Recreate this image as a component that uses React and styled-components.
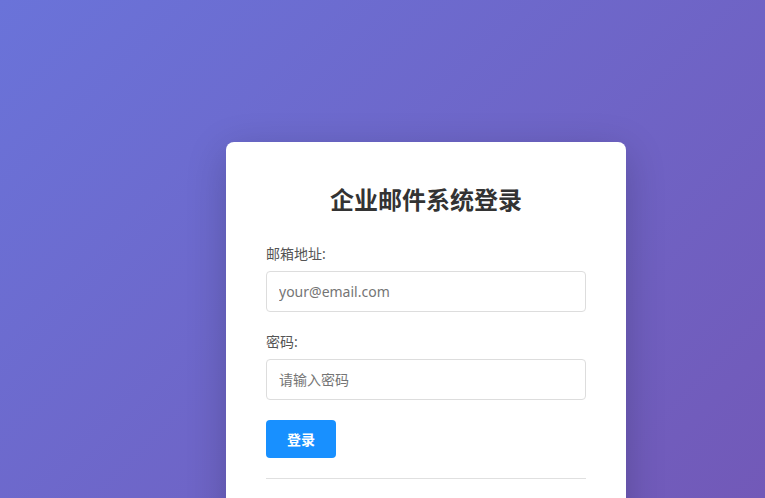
import styled, { createGlobalStyle } from 'styled-components';

const GlobalStyle = createGlobalStyle`
html, body {
  margin: 0;
  padding: 0;
}
body {
  font-family: "Noto Sans", "Noto Sans CJK SC", sans-serif;
  background: linear-gradient(135deg, #6a73d9 0%, #7259b8 100%) fixed;
  min-height: 100vh;
}
* {
  box-sizing: border-box;
}
`;

function App() {
    return (
        <Page>
            <GlobalStyle />
            <Card>
                <Title>企业邮件系统登录</Title>
                <Field>
                    <Label htmlFor="email">邮箱地址:</Label>
                    <Input id="email" type="email" placeholder="your@email.com" />
                </Field>
                <Field>
                    <Label htmlFor="password">密码:</Label>
                    <Input id="password" type="password" placeholder="请输入密码" />
                </Field>
                <Button type="button">登录</Button>
                <Divider />
            </Card>
        </Page>
    )
}

export default App;

const Page = styled.div`
display: flex;
justify-content: flex-start;
align-items: flex-start;
padding: 142px 0 0 226px;
`;

const Card = styled.div`
width: 400px;
background: #fff;
border-radius: 8px;
padding: 40px;
box-shadow: 0 10px 40px rgba(0, 0, 0, 0.2);
`;

const Title = styled.h2`
margin: 0 0 26px;
text-align: center;
font-size: 24px;
line-height: 36px;
font-weight: 700;
color: #333;
`;

const Field = styled.div`
margin-bottom: 20px;
`;

const Label = styled.label`
display: block;
margin-bottom: 8px;
font-size: 14px;
line-height: 19px;
color: #555;
`;

const Input = styled.input`
display: block;
width: 100%;
height: 41px;
padding: 0 12px;
border: 1px solid #ddd;
border-radius: 4px;
font-family: inherit;
font-size: 14px;
color: #333;
outline: none;

&::placeholder {
  color: #757575;
}
`;

const Button = styled.button`
display: block;
width: 70px;
height: 38px;
border: none;
border-radius: 4px;
background: #1890ff;
color: #fff;
font-family: inherit;
font-size: 14px;
font-weight: 700;
cursor: pointer;
`;

const Divider = styled.hr`
margin: 20px 0;
border: none;
border-top: 1px solid #e0e0e0;
`;
